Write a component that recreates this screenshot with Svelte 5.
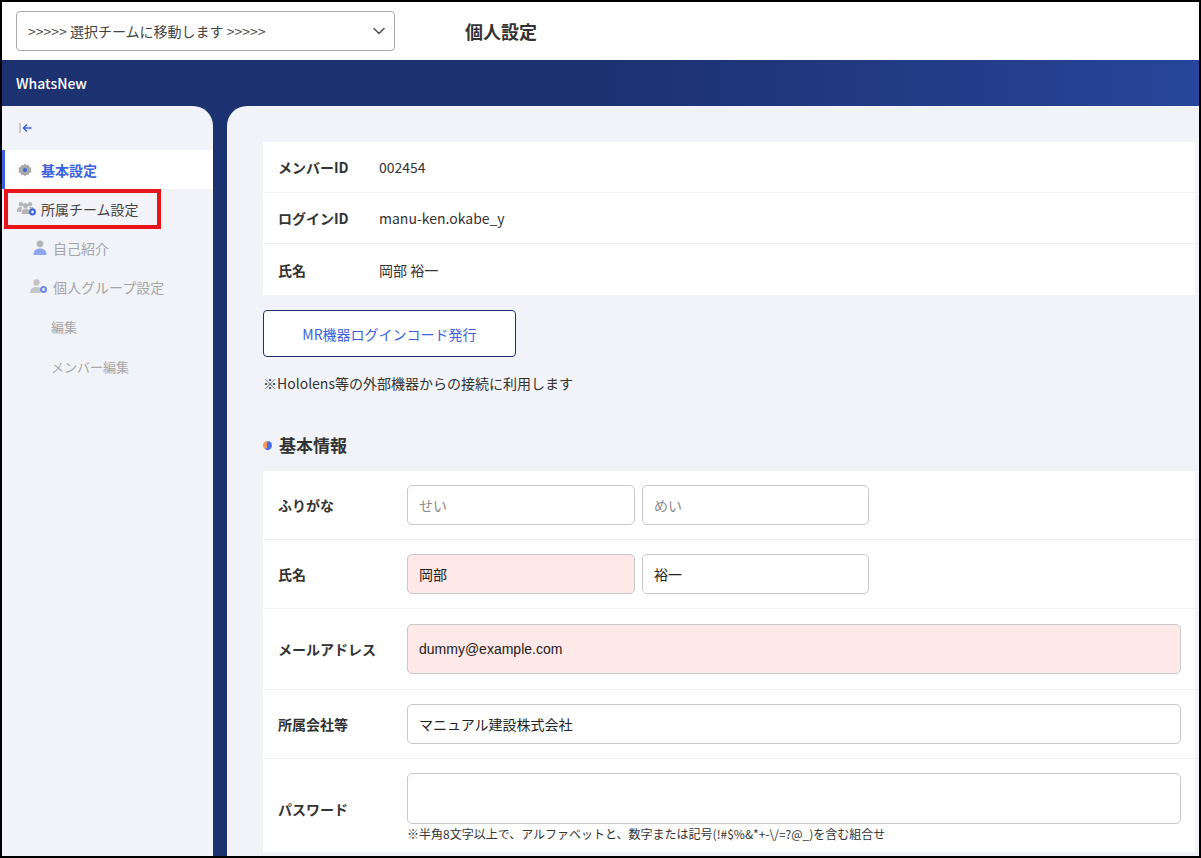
<script>
    const infoRows = [
        { label: 'メンバーID', value: '002454' },
        { label: 'ログインID', value: 'manu-ken.okabe_y' },
        { label: '氏名', value: '岡部 裕一' }
    ];
</script>

<div class="frame">
    <header class="topbar">
        <div class="team-select">
            <span>&gt;&gt;&gt;&gt;&gt; 選択チームに移動します &gt;&gt;&gt;&gt;&gt;</span>
            <svg class="chevron" width="12" height="8" viewBox="0 0 12 8"><path d="M1 1.5l5 5 5-5" fill="none" stroke="#555" stroke-width="1.6" stroke-linecap="round" stroke-linejoin="round"/></svg>
        </div>
        <h1>個人設定</h1>
    </header>
    <div class="navbar">WhatsNew</div>

    <div class="body">
        <aside class="sidebar">
            <div class="collapse">
                <svg width="14" height="12" viewBox="0 0 14 12">
                    <path d="M1 1v10" stroke="#b4b8c4" stroke-width="1.4"/>
                    <path d="M12.5 6H5M8 2.5L4.5 6 8 9.5" fill="none" stroke="#3a62e0" stroke-width="1.6"/>
                </svg>
            </div>
            <nav>
                <div class="item active">
                    <svg width="14" height="14" viewBox="0 0 14 14">
                        <path d="M7 .5l1.4 1.7 2.2-.4.7 2.1 2.1.8-.5 2.3.5 2.3-2.1.7-.7 2.1-2.2-.4L7 13.5l-1.4-1.7-2.2.4-.7-2.1-2.1-.7.5-2.3-.5-2.3 2.1-.8.7-2.1 2.2.4z" fill="#a9a9ab"/>
                        <circle cx="7" cy="7" r="2" fill="#3a62e0"/>
                    </svg>
                    <span>基本設定</span>
                </div>
                <div class="item team">
                    <svg width="20" height="15" viewBox="0 0 20 15">
                        <circle cx="4" cy="3.2" r="2.2" fill="#b5b5b7"/>
                        <circle cx="13" cy="3.2" r="2.2" fill="#b5b5b7"/>
                        <circle cx="8.5" cy="4.5" r="2.6" fill="#b5b5b7"/>
                        <path d="M0 10c0-3 1.5-4 3.5-4S5 7 4 11H0zM4.5 13c0-3.500 1.500-5.500 4-5.500s4 1 4.500 3V13z" fill="#b5b5b7"/>
                        <path d="M12 6.500c2.500-1 5-.5 5.500 1.500H13z" fill="#b5b5b7"/>
                        <circle cx="15.500" cy="11" r="2.400" fill="none" stroke="#3a62e0" stroke-width="2"/>
                    </svg>
                    <span>所属チーム設定</span>
                </div>
                <div class="item sub">
                    <svg width="16" height="15" viewBox="0 0 16 15">
                        <circle cx="8" cy="3.800" r="3.400" fill="#b5b5b7"/>
                        <path d="M1.500 15c0-4.500 2.500-6.500 6.500-6.500s6.500 2 6.500 6.500z" fill="#8ea6ec"/>
                    </svg>
                    <span>自己紹介</span>
                </div>
                <div class="item sub group">
                    <svg width="18" height="15" viewBox="0 0 18 15">
                        <circle cx="6.500" cy="3.500" r="3.200" fill="#c4c4c6"/>
                        <path d="M0 14c0-4 2.500-6 6.500-6 1.500 0 2.500.3 3.500.8V14z" fill="#c4c4c6"/>
                        <circle cx="13.500" cy="10.500" r="2.500" fill="none" stroke="#6d8ae6" stroke-width="2.200"/>
                    </svg>
                    <span>個人グループ設定</span>
                </div>
                <div class="item leaf">編集</div>
                <div class="item leaf">メンバー編集</div>
            </nav>
        </aside>

        <main class="main">
            <section class="card">
                {#each infoRows as row}
                    <div class="info-row">
                        <span class="info-label">{row.label}</span>
                        <span>{row.value}</span>
                    </div>
                {/each}
            </section>

            <button class="mr-button">MR機器ログインコード発行</button>
            <p class="note">※Hololens等の外部機器からの接続に利用します</p>

            <h2><i class="dot"></i>基本情報</h2>

            <section class="card form">
                <div class="form-row kana">
                    <span class="form-label">ふりがな</span>
                    <div class="pair">
                        <input placeholder="せい" />
                        <input placeholder="めい" />
                    </div>
                </div>
                <div class="form-row name">
                    <span class="form-label">氏名</span>
                    <div class="pair">
                        <input class="error" value="岡部" />
                        <input value="裕一" />
                    </div>
                </div>
                <div class="form-row mail">
                    <span class="form-label">メールアドレス</span>
                    <input class="wide error latin" value="dummy@example.com" />
                </div>
                <div class="form-row company">
                    <span class="form-label">所属会社等</span>
                    <input class="wide" value="マニュアル建設株式会社" />
                </div>
                <div class="form-row password">
                    <span class="form-label">パスワード</span>
                    <div class="field">
                        <input class="wide tall" type="text" />
                        <small>※半角8文字以上で、アルファベットと、数字または記号(!#$%&amp;*+-\/=?@_)を含む組合せ</small>
                    </div>
                </div>
            </section>
        </main>
    </div>

    <div class="highlight"></div>
</div>

<style>
    :global(body) {
        margin: 0;
    }

    .frame {
        position: relative;
        box-sizing: border-box;
        width: 1201px;
        height: 858px;
        border: 2px solid #000;
        overflow: hidden;
        display: flex;
        flex-direction: column;
        font-family: "Noto Sans CJK JP", "Noto Sans", sans-serif;
        font-size: 14px;
        color: #333;
        background: #fff;
    }

    .topbar {
        height: 58px;
        flex: none;
        display: flex;
        align-items: center;
        padding-left: 14px;
        box-sizing: border-box;
    }

    .team-select {
        box-sizing: border-box;
        width: 379px;
        height: 40px;
        border: 1px solid #aaa;
        border-radius: 4px;
        display: flex;
        align-items: center;
        justify-content: space-between;
        padding: 0 9px 0 11px;
        font-size: 14px;
        color: #444;
    }

    h1 {
        margin: 0 0 0 70px;
        font-size: 18px;
        font-weight: 700;
        color: #333;
    }

    .navbar {
        height: 46px;
        flex: none;
        box-sizing: border-box;
        padding-left: 14px;
        display: flex;
        align-items: center;
        color: #fff;
        font-size: 14px;
        font-weight: 500;
        background: linear-gradient(90deg, #1c3170 0%, #1c3170 50%, #27459a 100%);
    }

    .body {
        flex: 1;
        min-height: 0;
        display: flex;
        gap: 14px;
        background: #1c3170;
    }

    .sidebar {
        width: 211px;
        flex: none;
        background: #f1f3f8;
        border-top-right-radius: 20px;
    }

    .collapse {
        height: 44px;
        display: flex;
        align-items: center;
        padding-left: 17px;
    }

    .item {
        display: flex;
        align-items: center;
        height: 39px;
        box-sizing: border-box;
        font-size: 14px;
    }

    .active {
        background: #fff;
        border-left: 3px solid #3a62e0;
        padding-left: 13px;
        gap: 9px;
        color: #3a62e0;
        font-weight: 700;
    }

    .team {
        padding-left: 15px;
        gap: 4px;
        color: #444;
    }

    .sub {
        color: #a5a5a7;
        padding-left: 30px;
        gap: 5px;
    }

    .group {
        padding-left: 28px;
        gap: 5px;
    }

    .leaf {
        color: #a5a5a7;
        font-size: 13px;
        padding-left: 49px;
        height: 40px;
    }

    .main {
        flex: 1;
        min-width: 0;
        background: #f1f3f8;
        border-top-left-radius: 20px;
        padding: 36px 4px 0 36px;
        overflow: hidden;
    }

    .card {
        background: #fff;
    }

    .info-row {
        height: 51px;
        box-sizing: border-box;
        display: flex;
        align-items: center;
        padding-left: 15px;
        border-bottom: 1px solid #f1f3f8;
    }

    .info-row:last-child {
        border-bottom: 0;
    }

    .info-label {
        width: 101px;
        font-weight: 700;
    }

    .mr-button {
        display: block;
        margin-top: 15px;
        width: 253px;
        height: 47px;
        background: #fff;
        border: 1px solid #1c3170;
        border-radius: 4px;
        color: #3a62e0;
        font-family: inherit;
        font-size: 14px;
    }

    .note {
        margin: 14px 0 0;
        line-height: 24px;
        font-size: 14px;
    }

    h2 {
        margin: 36px 0 0;
        height: 28px;
        display: flex;
        align-items: center;
        font-size: 17px;
        font-weight: 700;
        line-height: 28px;
    }

    .dot {
        width: 9px;
        height: 9px;
        border-radius: 50%;
        margin-right: 7px;
        background: linear-gradient(100deg, #f59a5a 0 45%, #4f6fe8 45%);
    }

    .form {
        margin-top: 12px;
    }

    .form-row {
        display: flex;
        align-items: center;
        padding: 0 14px 0 15px;
        border-bottom: 1px solid #f1f3f8;
        box-sizing: border-box;
    }

    .kana { height: 69px; }
    .name { height: 69px; }
    .mail { height: 81px; }
    .company { height: 69px; }

    .password {
        padding-top: 14px;
        padding-bottom: 8px;
        border-bottom: 0;
    }

    .form-label {
        width: 129px;
        flex: none;
        font-weight: 700;
    }

    .pair {
        display: flex;
        gap: 7px;
    }

    input {
        box-sizing: border-box;
        width: 228px;
        height: 40px;
        padding: 0 11px;
        border: 1px solid #c8c8c8;
        border-radius: 5px;
        background: #fff;
        color: #222;
        font-family: inherit;
        font-size: 14px;
        outline: none;
    }

    .pair input + input {
        width: 227px;
    }

    input::placeholder {
        color: #8a8a8a;
    }

    .error {
        background: #ffe8e8;
    }

    .wide {
        width: 774px;
        flex: none;
    }

    .mail .wide {
        height: 50px;
    }

    .latin {
        font-family: "Liberation Sans", sans-serif;
    }

    .tall {
        display: block;
        height: 51px;
    }

    small {
        display: block;
        font-size: 12px;
        line-height: 20px;
    }

    .highlight {
        position: absolute;
        left: 2px;
        top: 187px;
        width: 157px;
        height: 40px;
        box-sizing: border-box;
        border: 4px solid #e8141c;
    }
</style>
